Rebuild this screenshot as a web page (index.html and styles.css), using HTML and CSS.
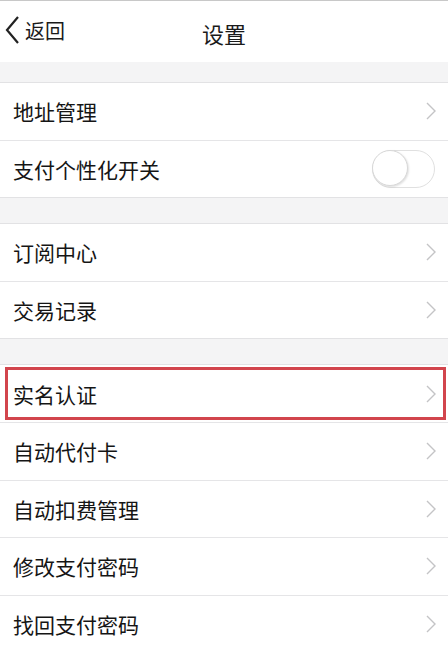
FILE: index.html
```html
<!DOCTYPE html>
<html lang="zh-CN">
<head>
  <meta charset="UTF-8" />
  <title>设置</title>
  <link rel="stylesheet" href="styles.css">
</head>
<body>
  <div class="topbar">
    <div class="back">
      <svg width="16" height="30" viewBox="0 0 16 30"><path d="M14 2 L3 15 L14 28" fill="none" stroke="#222" stroke-width="2.2"/></svg>
      <span>返回</span>
    </div>
    <div class="title">设置</div>
  </div>

  <div class="group">
    <div class="row"><span>地址管理</span><svg class="arrow" width="10" height="18" viewBox="0 0 10 18"><path d="M1 1 L9 9 L1 17" /></svg></div>
    <div class="row"><span>支付个性化开关</span><div class="switch"><div class="knob"></div></div></div>
  </div>

  <div class="group">
    <div class="row"><span>订阅中心</span><svg class="arrow" width="10" height="18" viewBox="0 0 10 18"><path d="M1 1 L9 9 L1 17" /></svg></div>
    <div class="row"><span>交易记录</span><svg class="arrow" width="10" height="18" viewBox="0 0 10 18"><path d="M1 1 L9 9 L1 17" /></svg></div>
  </div>

  <div class="group">
    <div class="row mark"><span>实名认证</span><svg class="arrow" width="10" height="18" viewBox="0 0 10 18"><path d="M1 1 L9 9 L1 17" /></svg></div>
    <div class="row"><span>自动代付卡</span><svg class="arrow" width="10" height="18" viewBox="0 0 10 18"><path d="M1 1 L9 9 L1 17" /></svg></div>
    <div class="row"><span>自动扣费管理</span><svg class="arrow" width="10" height="18" viewBox="0 0 10 18"><path d="M1 1 L9 9 L1 17" /></svg></div>
    <div class="row"><span>修改支付密码</span><svg class="arrow" width="10" height="18" viewBox="0 0 10 18"><path d="M1 1 L9 9 L1 17" /></svg></div>
    <div class="row"><span>找回支付密码</span><svg class="arrow" width="10" height="18" viewBox="0 0 10 18"><path d="M1 1 L9 9 L1 17" /></svg></div>
  </div>
</body>
</html>
```

FILE: styles.css
```css
body {
  margin: 0;
  padding: 0;
  font-family: "Noto Sans CJK SC", "Noto Sans", sans-serif;
  background: #f4f4f5;
  color: #151515;
  width: 448px;
  height: 652px;
  overflow: hidden;
}
.topbar {
  height: 61px;
  background: #fff;
  border-top: 1px solid #c8c8c8;
  display: flex;
  align-items: center;
  justify-content: center;
  position: relative;
}
.back {
  position: absolute;
  left: 4px;
  top: 14px;
  display: flex;
  align-items: center;
  gap: 5px;
  font-size: 20px;
  color: #1a1a1a;
}
.title {
  font-size: 22px;
  color: #1a1a1a;
  margin-top: 2px;
}
.group {
  background: #fff;
  border-top: 1px solid #e2e2e4;
  border-bottom: 1px solid #e2e2e4;
  margin-top: 20px;
}
.group + .group {
  margin-top: 25px;
}
.row {
  height: 57.6px;
  box-sizing: border-box;
  display: flex;
  align-items: center;
  justify-content: space-between;
  padding: 0 12px 0 13px;
  font-size: 21px;
  border-bottom: 1px solid #e5e5e7;
  position: relative;
}
.row:last-child {
  border-bottom: none;
  height: 56.6px;
}
.arrow path {
  fill: none;
  stroke: #c4c4c6;
  stroke-width: 1.4;
}
.switch {
  width: 63px;
  height: 38px;
  box-sizing: border-box;
  border: 1.5px solid #e0e0e0;
  border-radius: 20px;
  background: #fff;
  position: relative;
  margin-right: 1px;
}
.knob {
  width: 36px;
  height: 36px;
  box-sizing: border-box;
  border-radius: 50%;
  border: 1.5px solid #d8d8d8;
  box-shadow: 1px 1px 2px rgba(0, 0, 0, 0.12);
  background: #fff;
  position: absolute;
  left: -1px;
  top: -0.5px;
}
.mark::after {
  content: "";
  position: absolute;
  left: 5px;
  right: 2px;
  top: 2px;
  bottom: 2px;
  border: 3px solid #d2454d;
}
```
